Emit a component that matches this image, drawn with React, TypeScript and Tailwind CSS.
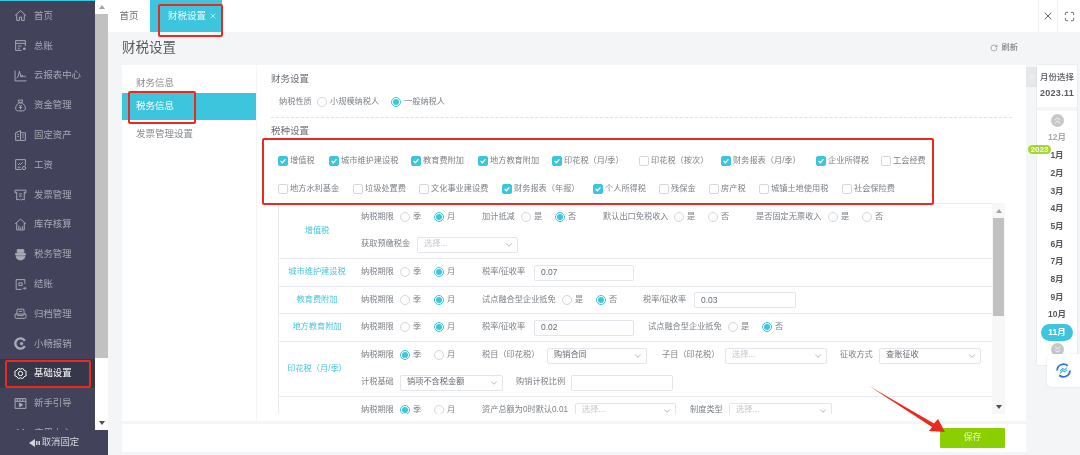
import type { ReactNode } from "react";
import { ChevronDown, ChevronsDown, ChevronsRight, ChevronsUp, Maximize, RotateCw, X } from "lucide-react";

function Ico({ className, children }: { className?: string; children: ReactNode }) {
  return (
    <svg viewBox="0 0 24 24" fill="none" stroke="currentColor" strokeWidth="1.800" className={className}>
      {children}
    </svg>
  );
}

type IconProps = { className?: string };

const HomeIcon = ({ className }: IconProps) => (
  <Ico className={className}>
    <path d="M2 12 12 3l10 9" />
    <path d="M5 10v11h5v-6h4v6h5V10" />
  </Ico>
);
const LedgerIcon = ({ className }: IconProps) => (
  <Ico className={className}>
    <path d="M21 13V3H3v18h11" />
    <path d="M3 8h18M7 13h7M7 17h4" />
    <circle cx="19" cy="18" r="2.500" fill="currentColor" stroke="none" />
  </Ico>
);
const ChartIcon = ({ className }: IconProps) => (
  <Ico className={className}>
    <path d="M2 3v19h21" />
    <path d="M5 17l3-4 2-9 3 11 2-4 2 4 2-2 3 2" />
  </Ico>
);
const BagIcon = ({ className }: IconProps) => (
  <Ico className={className}>
    <path d="M8 2h8l-1.500 5h-5z" />
    <path d="M9.500 7C5.500 9.500 3 13 3 17c0 3 2 5 5 5h8c3 0 5-2 5-5 0-4-2.500-7.500-6.500-10z" />
    <path d="M9.500 11 12 13.500 14.500 11M12 13.500V19M9 15.500h6" />
  </Ico>
);
const AssetIcon = ({ className }: IconProps) => (
  <Ico className={className}>
    <path d="M3 7l9-4v18H3z" />
    <path d="M12 7h9v14h-9" />
    <path d="M6 10h3M6 14h3M15 11h3M15 15h3" />
  </Ico>
);
const SalaryIcon = ({ className }: IconProps) => (
  <Ico className={className}>
    <path d="M14 21H3V3h18v11" />
    <path d="M7 13l3-3 2 2 4-4M7 17h5" />
    <circle cx="18.500" cy="18.500" r="3" />
  </Ico>
);
const InvoiceIcon = ({ className }: IconProps) => (
  <Ico className={className}>
    <path d="M2 4h20v5h-3M5 9H2V4" />
    <path d="M5 7v15l2.500-1.500L10 22l2-1.500 2 1.500 2.500-1.500L19 22V7" />
    <path d="M9 11h6M9 15h6" />
  </Ico>
);
const StockIcon = ({ className }: IconProps) => (
  <Ico className={className}>
    <path d="M2 11 12 2l10 9" />
    <path d="M5 9v13h14V9" />
    <path d="M9 21v-7M12.500 21v-4M16 21v-6" />
  </Ico>
);
const TaxIcon = ({ className }: IconProps) => (
  <Ico className={className} >
    <path d="M6 3h12v5H6z" fill="currentColor" />
    <path d="M3 10h18v3H3z" fill="currentColor" />
    <path d="M4 15h16c0 4-3 7-8 7s-8-3-8-7z" fill="currentColor" />
  </Ico>
);
const CloseIcon = ({ className }: IconProps) => (
  <Ico className={className}>
    <path d="M20 11V3H4v18h10" />
    <path d="M9 9h6v5H9z" />
    <path d="M16 19h6M19.500 16.500 22 19l-2.500 2.500" />
  </Ico>
);
const ArchiveIcon = ({ className }: IconProps) => (
  <Ico className={className}>
    <path d="M6 4h12l1 9H5z" />
    <path d="M9 8h6" />
    <path d="M5 13H2v6a2 2 0 0 0 2 2h16a2 2 0 0 0 2-2v-6h-3l-2 3H7z" />
  </Ico>
);
const ReimburseIcon = ({ className }: IconProps) => (
  <Ico className={className}>
    <path d="M20 7A9.500 9.500 0 1 0 20 17" strokeWidth="4.500" />
    <circle cx="14" cy="12" r="3" fill="currentColor" stroke="none" />
  </Ico>
);
const SettingIcon = ({ className }: IconProps) => (
  <Ico className={className}>
    <path d="M8 2.500l4 1.500 4-1.500 2.500 3.500 4 2-.5 4 .5 4-4 2-2.500 3.500-4-1.500-4 1.500L5.500 18l-4-2 .5-4-.5-4 4-2z" />
    <circle cx="12" cy="12" r="4" />
  </Ico>
);
const GuideIcon = ({ className }: IconProps) => (
  <Ico className={className}>
    <path d="M2 3h20v18H2zM2 8h20" />
    <path d="M6 3v5M11 3v5M16 3v5" />
    <path d="M10 11l6 3.500-6 3.500z" fill="currentColor" />
  </Ico>
);
const AppIcon = ({ className }: IconProps) => (
  <Ico className={className}>
    <path d="M3 10l4-6 5 5 5-5 4 6v11H3z" />
  </Ico>
);

const menu = [
  { name: "首页", icon: HomeIcon },
  { name: "总账", icon: LedgerIcon },
  { name: "云报表中心", icon: ChartIcon },
  { name: "资金管理", icon: BagIcon },
  { name: "固定资产", icon: AssetIcon },
  { name: "工资", icon: SalaryIcon },
  { name: "发票管理", icon: InvoiceIcon },
  { name: "库存核算", icon: StockIcon },
  { name: "税务管理", icon: TaxIcon },
  { name: "结账", icon: CloseIcon },
  { name: "归档管理", icon: ArchiveIcon },
  { name: "小畅报销", icon: ReimburseIcon },
  { name: "基础设置", icon: SettingIcon, active: true },
  { name: "新手引导", icon: GuideIcon },
  { name: "应用中心", icon: AppIcon },
];

const taxRow1 = [
  { name: "增值税", on: true, w: "w-[51px]" },
  { name: "城市维护建设税", on: true, w: "w-[82px]" },
  { name: "教育费附加", on: true, w: "w-[67px]" },
  { name: "地方教育附加", on: true, w: "w-[74px]" },
  { name: "印花税（月/季）", on: true, w: "w-[87px]" },
  { name: "印花税（按次）", on: false, w: "w-[82px]" },
  { name: "财务报表（月/季）", on: true, w: "w-[95px]" },
  { name: "企业所得税", on: true, w: "w-[65px]" },
  { name: "工会经费", on: false, w: "w-[50px]" },
];

const taxRow2 = [
  { name: "地方水利基金", on: false, w: "w-[75px]" },
  { name: "垃圾处置费", on: false, w: "w-[66px]" },
  { name: "文化事业建设费", on: false, w: "w-[83px]" },
  { name: "财务报表（年报）", on: true, w: "w-[91px]" },
  { name: "个人所得税", on: true, w: "w-[66px]" },
  { name: "残保金", on: false, w: "w-[50px]" },
  { name: "房产税", on: false, w: "w-[50px]" },
  { name: "城镇土地使用税", on: false, w: "w-[83px]" },
  { name: "社会保险费", on: false, w: "w-[60px]" },
];

const months = ["12月", "1月", "2月", "3月", "4月", "5月", "6月", "7月", "8月", "9月", "10月", "11月"];

function Radio({ label, on, w = "w-[34px]" }: { label: string; on?: boolean; w?: string }) {
  return (
    <span className={`flex shrink-0 items-center gap-[3px] ${w}`}>
      <span
        className={`flex h-[10px] w-[10px] shrink-0 items-center justify-center rounded-full border bg-white ${
          on ? "border-[#3cc5dc]" : "border-[#d4d8dd]"
        }`}
      >
        {on && <span className="h-[6px] w-[6px] rounded-full bg-[#3cc5dc]" />}
      </span>
      <span className="whitespace-nowrap">{label}</span>
    </span>
  );
}

function Check({ name, on, w }: { name: string; on: boolean; w: string }) {
  return (
    <span className={`flex shrink-0 items-center gap-[2px] ${w}`}>
      <span
        className={`flex h-[10px] w-[10px] shrink-0 items-center justify-center rounded-[2px] border ${
          on ? "border-[#3cc5dc] bg-[#3cc5dc]" : "border-[#d4d8dd] bg-white"
        }`}
      >
        {on && (
          <svg viewBox="0 0 10 10" className="h-[8px] w-[8px]" fill="none" stroke="white" strokeWidth="1.500">
            <path d="M2 5l2.200 2.200L8 3" />
          </svg>
        )}
      </span>
      <span className="whitespace-nowrap">{name}</span>
    </span>
  );
}

function Label({ text, className }: { text: string; className: string }) {
  return <span className={`shrink-0 whitespace-nowrap ${className}`}>{text}</span>;
}

function Select({ value, w }: { value?: string; w: string }) {
  return (
    <span className={`flex h-[16px] shrink-0 items-center justify-between rounded-[2px] border border-[#e2e5e9] bg-white pl-[6px] pr-[3px] ${w}`}>
      <span className={value ? "text-[#666a70]" : "text-[#c4c7cc]"}>{value ?? "选择..."}</span>
      <ChevronDown className="h-[10px] w-[10px] text-[#777]" strokeWidth={1.25} />
    </span>
  );
}

function Input({ value, w }: { value?: string; w: string }) {
  return (
    <span className={`flex h-[16px] shrink-0 items-center rounded-[2px] border border-[#e2e5e9] bg-white pl-[6px] text-[8.500px] text-[#666a70] ${w}`}>
      {value}
    </span>
  );
}

function Period({ on = "月" }: { on?: string }) {
  return (
    <>
      <Label text="纳税期限" className="w-[39px]" />
      <Radio label="季" on={on === "季"} />
      <Radio label="月" on={on === "月"} />
    </>
  );
}

function Row({ title, className, children }: { title: string; className?: string; children: ReactNode }) {
  return (
    <div className={`flex border-b border-[#e9ebee] ${className ?? ""}`}>
      <div className="flex w-[76px] shrink-0 items-center justify-center whitespace-nowrap text-[#45c5dd]">{title}</div>
      <div className="ml-[6px] flex flex-col">{children}</div>
    </div>
  );
}

function Line({ h = "h-[27px]", children }: { h?: string; children: ReactNode }) {
  return <div className={`flex items-center ${h}`}>{children}</div>;
}

export default function App() {
  return (
    <div className="relative flex h-[455px] w-[1080px] overflow-hidden bg-[#f3f5f6] font-['Liberation_Sans','Noto_Sans_CJK_SC',sans-serif] text-[8.200px] text-[#7d8187] blur-[0.3px]">
      {/* 左侧菜单 */}
      <aside className="flex w-[108px] shrink-0 flex-col">
        <div className="flex h-[430px] bg-[#42425a]">
          <nav className="w-[95px] overflow-hidden border-t border-[#3cc5dc] text-[9.400px] text-[#a9a9b7]">
            {menu.map((item) => {
              const Icon = item.icon;
              return (
                <div
                  key={item.name}
                  className={`flex h-[29.800px] items-center gap-[7px] pl-[14px] ${item.active ? "bg-[#37374a] text-white" : ""}`}
                >
                  <Icon className="h-[13px] w-[13px] shrink-0" />
                  <span className="whitespace-nowrap">{item.name}</span>
                </div>
              );
            })}
          </nav>
          <div className="flex w-[13px] flex-col bg-[#f1f1f1]">
            <div className="flex h-[14px] items-center justify-center bg-white">
              <span className="h-0 w-0 border-x-[3px] border-b-[4px] border-x-transparent border-b-[#a3a3a3]" />
            </div>
            <div className="h-[344px] bg-[#c1c1c1]" />
            <div className="flex-1 bg-white" />
            <div className="flex h-[14px] items-center justify-center bg-white">
              <span className="h-0 w-0 border-x-[3px] border-t-[4px] border-x-transparent border-t-[#505050]" />
            </div>
          </div>
        </div>
        <div className="flex flex-1 items-center justify-center gap-[1px] bg-[#42425a] text-[9.400px] text-[#d5d5dc]">
          <svg viewBox="0 0 12 8" className="h-[8px] w-[12px]" fill="currentColor">
            <path d="M0 4l6-4v8z" />
            <path d="M7 2h1.500v4H7zM9.500 2H11v4H9.500z" />
          </svg>
          <span>取消固定</span>
        </div>
      </aside>

      {/* 内容区 */}
      <div className="flex min-w-0 flex-1 flex-col">
        <header className="flex h-[32px] shrink-0 bg-white text-[9.500px]">
          <div className="flex w-[42px] items-center justify-center text-[#6a6e74]">首页</div>
          <div className="flex w-[72px] items-center justify-end gap-[3px] bg-[#3cc5dc] pr-[5px] text-[#eafbff]">
            <span>财税设置</span>
            <X className="h-[8px] w-[8px]" strokeWidth={2} />
          </div>
          <div className="flex-1" />
          <div className="flex w-[20px] items-center justify-center border-x border-[#f1f2f4] text-[#444]">
            <X className="h-[12px] w-[12px]" strokeWidth={1.75} />
          </div>
          <div className="flex w-[22px] items-center justify-center text-[#444]">
            <Maximize className="h-[11px] w-[11px]" strokeWidth={1.75} />
          </div>
        </header>

        <div className="flex h-[33px] shrink-0 items-center justify-between pl-[14px] pr-[62px]">
          <h1 className="text-[13.500px] font-normal text-[#56595e]">财税设置</h1>
          <span className="flex items-center gap-[4px] text-[#6a6e74]">
            <RotateCw className="h-[8px] w-[8px]" strokeWidth={1.5} />
            刷新
          </span>
        </div>

        <div className="flex h-[356px] shrink-0">
          <div className="ml-[14px] w-[134px] bg-white pt-[8px] text-[9.500px] text-[#878b90]">
            <div className="flex h-[20px] items-center pl-[14px]">财务信息</div>
            <div className="flex h-[27px] items-center bg-[#3cc5dc] pl-[14px] text-white">税务信息</div>
            <div className="mt-[1px] flex h-[27px] items-center pl-[14px]">发票管理设置</div>
          </div>

          <section className="ml-[1px] w-[769px] bg-white pl-[14px] pr-[14px] pt-[7px]">
            <h2 className="h-[14px] text-[9.500px] font-normal leading-[14px] text-[#6a6e74]">财务设置</h2>
            <div className="mt-[9px] flex h-[14px] items-center pl-[8px]">
              <Label text="纳税性质" className="w-[38px]" />
              <Radio label="小规模纳税人" on={false} w="w-[74px]" />
              <Radio label="一般纳税人" on />
            </div>
            <div className="mt-[8px] border-t border-dashed border-[#dfe1e4]" />
            <h2 className="mt-[6px] h-[14px] text-[9.500px] font-normal leading-[14px] text-[#6a6e74]">税种设置</h2>

            <div className="ml-[7px] mt-[16px] flex h-[14px] items-center">
              {taxRow1.map((t) => (
                <Check key={t.name} {...t} />
              ))}
            </div>
            <div className="ml-[7px] mt-[14px] flex h-[14px] items-center">
              {taxRow2.map((t) => (
                <Check key={t.name} {...t} />
              ))}
            </div>

            <div className="ml-[7px] mt-[7px] flex h-[211px] w-[727px]">
              <div className="w-[714px] overflow-hidden border-l border-t border-[#e9ebee]">
                <Row title="增值税">
                  <Line>
                    <Period />
                    <Label text="加计抵减" className="ml-[14px] w-[39px]" />
                    <Radio label="是" />
                    <Radio label="否" on />
                    <Label text="默认出口免税收入" className="ml-[14px] w-[71px]" />
                    <Radio label="是" />
                    <Radio label="否" />
                    <Label text="是否固定无票收入" className="ml-[14px] w-[72px]" />
                    <Radio label="是" />
                    <Radio label="否" />
                  </Line>
                  <Line>
                    <Label text="获取预缴税金" className="w-[56px]" />
                    <Select w="w-[101px]" />
                  </Line>
                </Row>
                <Row title="城市维护建设税">
                  <Line>
                    <Period />
                    <Label text="税率/征收率" className="ml-[14px] w-[52px]" />
                    <Input value="0.07" w="w-[100px]" />
                  </Line>
                </Row>
                <Row title="教育费附加">
                  <Line h="h-[26px]">
                    <Period />
                    <Label text="试点融合型企业抵免" className="ml-[14px] w-[80px]" />
                    <Radio label="是" />
                    <Radio label="否" on />
                    <Label text="税率/征收率" className="ml-[13px] w-[51px]" />
                    <Input value="0.03" w="w-[102px]" />
                  </Line>
                </Row>
                <Row title="地方教育附加">
                  <Line>
                    <Period />
                    <Label text="税率/征收率" className="ml-[14px] w-[52px]" />
                    <Input value="0.02" w="w-[100px]" />
                    <Label text="试点融合型企业抵免" className="ml-[14px] w-[80px]" />
                    <Radio label="是" />
                    <Radio label="否" on />
                  </Line>
                </Row>
                <Row title="印花税（月/季）">
                  <Line>
                    <Period on="季" />
                    <Label text="税目（印花税）" className="ml-[14px] w-[65px]" />
                    <Select value="购销合同" w="w-[100px]" />
                    <Label text="子目（印花税）" className="ml-[15px] w-[63px]" />
                    <Select w="w-[102px]" />
                    <Label text="征收方式" className="ml-[13px] w-[39px]" />
                    <Select value="查账征收" w="w-[102px]" />
                  </Line>
                  <Line>
                    <Label text="计税基础" className="w-[39px]" />
                    <Select value="销项不含税金额" w="w-[103px]" />
                    <Label text="购销计税比例" className="ml-[13px] w-[55px]" />
                    <Input w="w-[102px]" />
                  </Line>
                </Row>
                <Row title="" className="border-b-0">
                  <Line>
                    <Period on="季" />
                    <Label text="资产总额为0时默认0.01" className="ml-[14px] w-[93px]" />
                    <Select w="w-[101px]" />
                    <Label text="制度类型" className="ml-[14px] w-[39px]" />
                    <Select w="w-[103px]" />
                  </Line>
                </Row>
              </div>
              <div className="flex w-[13px] flex-col bg-[#f7f7f7] px-[1px]">
                <div className="flex h-[15px] items-center justify-center">
                  <span className="h-0 w-0 border-x-[3px] border-b-[4px] border-x-transparent border-b-[#a3a3a3]" />
                </div>
                <div className="h-[98px] bg-[#c1c1c1]" />
                <div className="flex-1" />
                <div className="flex h-[15px] items-center justify-center">
                  <span className="h-0 w-0 border-x-[3px] border-t-[4px] border-x-transparent border-t-[#505050]" />
                </div>
              </div>
            </div>
          </section>

          {/* 月份选择 */}
          <div className="mt-[2px] flex h-[20px] w-[11px] shrink-0 items-center justify-center bg-[#e6e7e8] text-white">
            <ChevronsRight className="h-[10px] w-[10px]" strokeWidth={1.5} />
          </div>
          <div className="flex h-[300px] w-[40px] shrink-0 flex-col text-[8.500px] font-bold text-[#55585e] shadow-[0_0_1px_rgba(0,0,0,0.2)]">
            <div className="flex h-[42px] flex-col items-center justify-center gap-[3px] bg-white">
              <span className="font-medium">月份选择</span>
              <span className="text-[9px] tracking-[0.3px]">2023.11</span>
            </div>
            <div className="h-[4px]" />
            <div className="flex flex-1 flex-col items-center bg-white pt-[3px]">
              <div className="flex h-[13px] w-[13px] shrink-0 items-center justify-center rounded-full bg-[#c6c7c9] text-white">
                <ChevronsUp className="h-[11px] w-[11px]" strokeWidth={1.75} />
              </div>
              <div className="mt-[2px]">
                {months.map((m) => (
                  <div
                    key={m}
                    className={`flex h-[17.700px] w-[32px] items-center justify-center rounded-full ${
                      m === "11月" ? "bg-[#3cc5dc] text-white" : m === "12月" ? "text-[#a9abb0]" : ""
                    }`}
                  >
                    {m}
                  </div>
                ))}
              </div>
              <div className="mt-[2px] flex h-[13px] w-[13px] shrink-0 items-center justify-center rounded-full bg-[#c6c7c9] text-white">
                <ChevronsDown className="h-[11px] w-[11px]" strokeWidth={1.75} />
              </div>
            </div>
          </div>
        </div>

        <div className="ml-[14px] mt-[3px] flex h-[28px] w-[904px] items-center justify-end bg-white pr-[21px]">
          <button className="h-[20px] w-[65px] rounded-[1px] bg-[#8ccf00] text-[9px] text-[#e8f8c8]">保存</button>
        </div>
      </div>

      {/* 浮层：年份徽标、客服卡片 */}
      <span className="absolute left-[1028px] top-[145px] flex h-[9px] w-[23px] items-center justify-center rounded-full bg-[#a4d82a] text-[8px] font-bold text-white">
        2023
      </span>
      <div className="absolute left-[1047px] top-[354px] flex h-[33px] w-[33px] items-center justify-center rounded-l-[5px] bg-white shadow-[0_0_3px_rgba(0,0,0,0.08)]">
        <svg viewBox="0 0 24 24" className="h-[17px] w-[17px]" fill="none" strokeWidth="2.500">
          <path d="M3 12a9 9 0 0 1 15-6.700" stroke="#2f74d8" />
          <path d="M21 12a9 9 0 0 1-15 6.700" stroke="#2f74d8" />
          <path d="M7 13l4-4 2.500 2L17 8M7 16l4-4 2.500 2L17 11" stroke="#3cb4e0" strokeWidth="1.500" />
        </svg>
      </div>

      {/* 红色标注 */}
      <div className="absolute left-[158px] top-[4px] h-[33px] w-[65px] rounded-[2px] border-2 border-[#ea2a1f]" />
      <div className="absolute left-[128px] top-[91px] h-[33px] w-[68px] rounded-[2px] border-2 border-[#ea2a1f]" />
      <div className="absolute left-[5px] top-[360px] h-[28px] w-[86px] rounded-[2px] border-2 border-[#ea2a1f]" />
      <div className="absolute left-[262px] top-[138px] h-[67px] w-[672px] rounded-[2px] border-2 border-[#ea2a1f]" />
      <svg className="absolute left-[860px] top-[380px] h-[60px] w-[90px]" viewBox="860 380 90 60">
        <polygon points="869,386 934,423.500 938,419 945,432 929,431 932,427" fill="#ea2a1f" />
      </svg>
    </div>
  );
}
